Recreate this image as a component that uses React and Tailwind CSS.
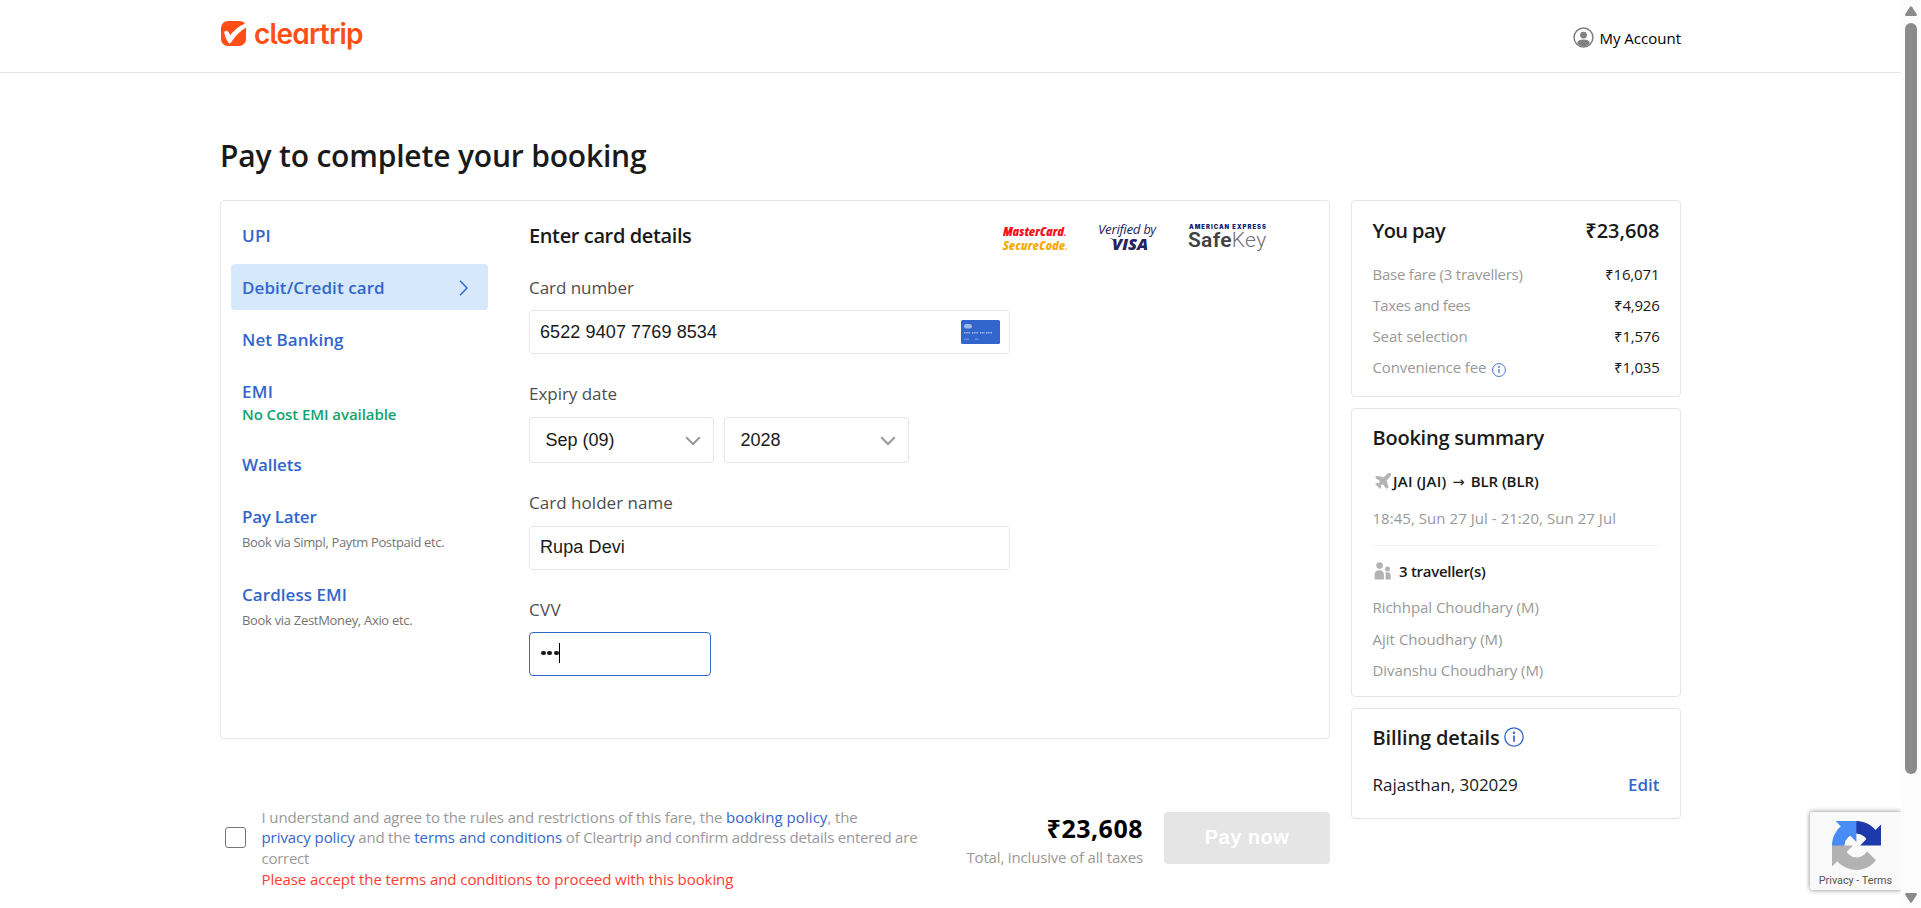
import React from "react";
import { Plane } from "lucide-react";

const fares = [
  ["Base fare (3 travellers)", "₹16,071", "tracking-[-0.015em]", "tracking-[-0.008em]"],
  ["Taxes and fees", "₹4,926", "tracking-[-0.028em]", "tracking-[-0.015em]"],
  ["Seat selection", "₹1,576", "tracking-[-0.007em]", "tracking-[-0.015em]"],
  ["Convenience fee", "₹1,035", "tracking-[-0.008em]", "tracking-[-0.015em]"],
];

function InfoIcon({ className }) {
  return (
    <svg viewBox="0 0 20 20" className={className} fill="none">
      <circle cx="10" cy="10" r="9.2" stroke="#3366cc" strokeWidth="1.3" />
      <circle cx="10" cy="5.7" r="1.25" fill="#3366cc" />
      <path d="M10 8.4v6.4" stroke="#3366cc" strokeWidth="1.7" />
    </svg>
  );
}

function BrandMark() {
  return (
    <svg viewBox="0 0 25 25" className="h-[25px] w-[25px]">
      <path
        d="M7 0h11.5c2.6 0 4.5 1 5.4 2.7C17.5 5 13 9.500 9.300 14.200 8.600 12.800 7.900 11.500 7.200 10.700 5.800 9 3 10 3.300 12c.5 3 2.300 7.300 4.200 9.700.8 1 1.900.9 2.600-.1C14 15.500 19 10.300 25 6.600V18a7 7 0 0 1-7 7H7a7 7 0 0 1-7-7V7a7 7 0 0 1 7-7z"
        fill="#ff4f17"
      />
    </svg>
  );
}

function Header() {
  return (
    <header className="h-[73px] border-b border-[#e6e6e6]">
      <div className="ml-[221px] flex h-full w-[1460px] items-start justify-between">
        <div className="flex items-start pt-[21px]">
          <BrandMark />
          <span className="-mt-px ml-[8px] font-[Inter,sans-serif] text-[28px] leading-[28px] font-semibold tracking-[-0.8px] text-[#ff4f17] [font-feature-settings:'cv11','cv05']">
            cleartrip
          </span>
        </div>
        <div className="flex items-center pt-[27px]">
          <svg viewBox="0 0 22 22" className="mr-[5px] mb-px h-[21px] w-[21px]" fill="none">
            <circle cx="11" cy="11" r="9.900" stroke="#808080" strokeWidth="1.600" />
            <circle cx="11" cy="8.500" r="3.600" fill="#808080" />
            <path d="M4.300 17.200c.6-3 3-4 6.700-4s6.100 1 6.700 4a9.200 9.200 0 0 1-13.400 0z" fill="#808080" />
          </svg>
          <span className="text-[15px] leading-[22px] text-black">My Account</span>
        </div>
      </div>
    </header>
  );
}

function Methods() {
  const title = "text-[17px] leading-5 font-semibold text-[#3366cc]";
  const sub = "text-[13px] leading-5 whitespace-nowrap text-[#757575]";
  return (
    <nav className="flex w-[257px] flex-col gap-1.5">
      <div className="flex h-[46px] items-center pt-[2px] pl-[11px]">
        <span className={title + " tracking-[0.015em]"}>UPI</span>
      </div>
      <div className="flex h-[46px] items-center justify-between rounded bg-[#d6e8fc] pr-[20px] pl-[11px]">
        <span className={title + " pt-[2px] tracking-[0.004em]"}>Debit/Credit card</span>
        <svg viewBox="0 0 9 16" className="mt-0.5 h-4 w-[9px]" fill="none" stroke="#3366cc" strokeWidth="1.500">
          <path d="M1 .7 8 8l-7 7.300" />
        </svg>
      </div>
      <div className="flex h-[46px] items-center pt-[2px] pl-[11px]">
        <span className={title + " tracking-[0.004em]"}>Net Banking</span>
      </div>
      <div className="h-[67px] pt-[14px] pl-[11px]">
        <div className={title + " tracking-[0.02em]"}>EMI</div>
        <div className="mt-[2px] text-[15px] leading-5 font-semibold tracking-[-0.005em] text-[#14a26f]">
          No Cost EMI available
        </div>
      </div>
      <div className="flex h-[46px] items-center pt-[2px] pl-[11px]">
        <span className={title + " tracking-[-0.005em]"}>Wallets</span>
      </div>
      <div className="h-[72px] pt-[14px] pl-[11px]">
        <div className={title + " tracking-[-0.015em]"}>Pay Later</div>
        <div className={sub + " mt-[5px] tracking-[-0.027em]"}>Book via Simpl, Paytm Postpaid etc.</div>
      </div>
      <div className="h-[72px] pt-[14px] pl-[11px]">
        <div className={title + " tracking-[0.003em]"}>Cardless EMI</div>
        <div className={sub + " mt-[5px] tracking-[-0.024em]"}>Book via ZestMoney, Axio etc.</div>
      </div>
    </nav>
  );
}

function SecurityLogos() {
  return (
    <div className="flex h-[30px] w-[265px] justify-between">
      <div className="w-[65px] pt-[4px] pl-px font-['Open_Sans',sans-serif] text-[13px] leading-[13px] font-extrabold whitespace-nowrap italic font-stretch-[75%]">
        <div className="tracking-[0.150px] text-[#f5101c]">
          MasterCard<span className="text-[8px]">.</span>
        </div>
        <div className="tracking-[0.400px] text-[#f7ab0a]">
          SecureCode<span className="text-[8px]">.</span>
        </div>
      </div>
      <div className="-mr-[1px] w-[60px] text-[#262262]">
        <div className="pt-[2px] text-[13.500px] leading-[13px] tracking-[-0.35px] whitespace-nowrap italic">
          Verified <span className="text-[12.500px]">by</span>
        </div>
        <div className="flex pt-px pl-[11px]">
          <svg viewBox="0 0 6 5" className="mt-[1px] -mr-[3px] h-[5px] w-[6px]">
            <path d="M0 .2C3 0 5 .5 6 4.500 4.800 2 3 .8 0 .2z" fill="#262262" />
          </svg>
          <span className="text-[16.500px] leading-[14px] font-extrabold italic">VISA</span>
        </div>
      </div>
      <div className="w-[79px] whitespace-nowrap">
        <div className="pt-[3px] pl-[1px] font-[Inter,sans-serif] text-[5.900px] leading-[6px] font-black tracking-[1.020px] text-[#0e2074]">
          AMERICAN EXPRESS
        </div>
        <div className="font-[Roboto,sans-serif] text-[21px] leading-[21px] tracking-[0.300px]">
          <span className="font-semibold text-[#414244]">Safe</span>
          <span className="font-light text-[#6f7072]">Key</span>
        </div>
      </div>
    </div>
  );
}

function CardGlyph() {
  return (
    <svg viewBox="0 0 39 24" className="h-6 w-[39px]">
      <rect width="39" height="24" rx="1.500" fill="#3366cc" />
      <rect x="3" y="4" width="8" height="4.500" rx="2.200" fill="#9fb8e8" />
      <path d="M3 12.700h6M11 12.700h6M19 12.700h5M25 12.700h6" stroke="#a9bfeb" strokeWidth="1.500" strokeDasharray="1.100 .6" />
      <path d="M3 19.200h5M14 19.200h3.500" stroke="#7f9fde" strokeWidth="1" />
    </svg>
  );
}

function Select({ value }) {
  return (
    <div className="flex h-[46px] w-[185px] items-center justify-between rounded border border-[#e6e6e6] pr-[12px] pl-[15.500px] font-['Liberation_Sans',Arial,sans-serif] text-[18px] leading-5 text-[#1a1a1a]">
      {value}
      <svg viewBox="0 0 16 10" className="mt-[2px] h-[10px] w-4" fill="none" stroke="#999999" strokeWidth="2">
        <path d="M1.200 1.300 8 8l6.800-6.700" />
      </svg>
    </div>
  );
}

function CardForm() {
  const label = "text-[17px] leading-5 text-[#4d4d4d]";
  const input =
    "flex h-11 items-center rounded border pl-[10px] font-['Liberation_Sans',Arial,sans-serif] text-[18px] leading-5 text-[#1a1a1a]";
  return (
    <section className="ml-[41px] w-[760px]">
      <div className="flex h-[30px] items-start justify-between pr-[22px]">
        <h2 className="pt-px text-[20px] leading-7 font-semibold tracking-[-0.019em] text-[#1a1a1a]">Enter card details</h2>
        <SecurityLogos />
      </div>
      <div className="mt-[27px]">
        <div className={label + " tracking-[-0.003em]"}>Card number</div>
        <div className={input + " mt-[12px] w-[481px] justify-between border-[#e6e6e6] pr-[9px] tracking-[0.1px]"}>
          6522 9407 7769 8534
          <CardGlyph />
        </div>
      </div>
      <div className="mt-[30px]">
        <div className={label + " tracking-[-0.002em]"}>Expiry date</div>
        <div className="mt-[13px] flex gap-[10px]">
          <Select value="Sep (09)" />
          <Select value="2028" />
        </div>
      </div>
      <div className="mt-[30px]">
        <div className={label + " tracking-[0.002em]"}>Card holder name</div>
        <div className={input + " mt-[13px] w-[481px] border-[#e6e6e6] pb-[3px] tracking-[0.1px]"}>Rupa Devi</div>
      </div>
      <div className="mt-[30px]">
        <div className={label + " tracking-[0.02em]"}>CVV</div>
        <div className={input + " mt-3 w-[182px] border-[#3366cc]"}>
          <span className="mt-[-2px] flex items-center gap-[1.900px] pl-[1px]">
            <i className="h-[4.600px] w-[4.600px] rounded-full bg-[#1a1a1a]" />
            <i className="h-[4.600px] w-[4.600px] rounded-full bg-[#1a1a1a]" />
            <i className="h-[4.600px] w-[4.600px] rounded-full bg-[#1a1a1a]" />
          </span>
          <span className="mt-[-3px] h-5 w-px bg-black" />
        </div>
      </div>
    </section>
  );
}

function Agreement() {
  return (
    <div className="mt-[68px] flex items-start">
      <div className="mt-5 ml-[5px] h-[21px] w-[21px] shrink-0 rounded-[3px] border border-[#767676] bg-white" />
      <div className="ml-[15.500px] w-[679.500px] text-[15px] leading-[21px] whitespace-nowrap text-[#999999]">
        <div className="leading-5 tracking-[-0.009em]">
          I understand and agree to the rules and restrictions of this fare, the{" "}
          <a className="tracking-[0.004em] text-[#3366cc]">booking policy</a>, the
        </div>
        <div className="tracking-[-0.014em]">
          <a className="tracking-[-0.004em] text-[#3366cc]">privacy policy</a> and the{" "}
          <a className="tracking-[-0.001em] text-[#3366cc]">terms and conditions</a> of Cleartrip and confirm address
          details entered are
        </div>
        <div className="tracking-[-0.018em]">correct</div>
        <div className="tracking-[-0.005em] text-[#ff3b30]">
          Please accept the terms and conditions to proceed with this booking
        </div>
      </div>
      <div className="flex-1 pt-[6px] text-right whitespace-nowrap">
        <div className="text-[25px] leading-[30px] font-bold tracking-[0.02em] text-black">₹23,608</div>
        <div className="mt-[4px] text-[15px] leading-5 tracking-[-0.011em] text-[#999999]">Total, inclusive of all taxes</div>
      </div>
      <button className="mt-[5px] ml-[21px] h-[52px] w-[166px] rounded bg-[#e5e5e5] pb-[2px] font-['Liberation_Sans',Arial,sans-serif] text-[20px] font-bold tracking-[0.5px] text-white">
        Pay now
      </button>
    </div>
  );
}

function Sidebar() {
  const card = "rounded border border-[#e6e6e6] pl-[20.500px] pr-[20.500px]";
  const head = "text-[20px] leading-7 font-semibold text-[#1a1a1a]";
  const grey = "text-[15px] leading-5 whitespace-nowrap text-[#999999]";
  return (
    <aside className="flex w-[330px] flex-col gap-[11px]">
      <div className={card + " h-[197px] pt-[16px]"}>
        <div className={head + " flex justify-between"}>
          <span className="tracking-[-0.030em]">You pay</span>
          <span className="tracking-[0.002em]">₹23,608</span>
        </div>
        <div className="mt-[19px] flex flex-col gap-[11px]">
          {fares.map(([name, amount, nameTrack, amountTrack]) => (
            <div key={name} className="flex h-5 items-center justify-between text-[15px] leading-5">
              <span className={"flex items-center text-[#999999] " + nameTrack}>
                {name}
                {name === "Convenience fee" && <InfoIcon className="mt-[5px] ml-[5.500px] h-[14px] w-[14px]" />}
              </span>
              <span className={"text-[#1a1a1a] " + amountTrack}>{amount}</span>
            </div>
          ))}
        </div>
      </div>
      <div className={card + " h-[289px] pt-[15px]"}>
        <div className={head + " tracking-[-0.012em]"}>Booking summary</div>
        <div className="mt-[19px] flex h-5 items-center text-[15px] font-semibold whitespace-nowrap text-[#1a1a1a]">
          <Plane className="h-5 w-5" fill="#b3b3b3" stroke="#b3b3b3" strokeWidth={1} />
          <span className="ml-[0.500px] tracking-[0.016em]">JAI (JAI)</span>
          <span className="mx-[6px] pt-[4px] font-['DejaVu_Sans'] text-[14.500px] font-normal">→</span>
          <span className="tracking-[-0.005em]">BLR (BLR)</span>
        </div>
        <div className={grey + " mt-[17px] tracking-[0.003em]"}>18:45, Sun 27 Jul - 21:20, Sun 27 Jul</div>
        <div className="mt-[17px] mr-px border-t border-[#f2f2f2]" />
        <div className="mt-[15px] flex h-5 items-center text-[15px] font-semibold text-[#1a1a1a]">
          <svg viewBox="0 0 17 18" className="ml-[1.500px] h-[18px] w-[17px]" fill="#b3b3b3">
            <circle cx="5.600" cy="3.600" r="3.300" />
            <path d="M.6 17.500v-4.800C.6 10 2.200 8.200 5.200 8.200s4.700 1.800 4.700 4.500v4.800z" />
            <circle cx="13.500" cy="7" r="2.500" />
            <path d="M11.600 17.500v-4.800c0-.9-.1-1.500-.4-2 .6-.4 1.300-.5 2-.5 2.100 0 3.500 1.200 3.500 3.300v4z" />
          </svg>
          <span className="ml-[8px] tracking-[-0.019em]">3 traveller(s)</span>
        </div>
        <div className={grey + " mt-4 tracking-[-0.003em]"}>Richhpal Choudhary (M)</div>
        <div className={grey + " mt-3 tracking-[0.001em]"}>Ajit Choudhary (M)</div>
        <div className={grey + " mt-[11px] tracking-[-0.006em]"}>Divanshu Choudhary (M)</div>
      </div>
      <div className={card + " h-[111px] pt-[15px]"}>
        <div className={head + " flex items-center"}>
          <span className="tracking-[-0.006em]">Billing details</span>
          <InfoIcon className="mb-[2px] ml-[4px] h-5 w-5" />
        </div>
        <div className="mt-[23px] flex justify-between text-[17px] leading-5">
          <span className="text-[#1a1a1a]">Rajasthan, 302029</span>
          <a className="font-semibold text-[#3366cc]">Edit</a>
        </div>
      </div>
    </aside>
  );
}

function Captcha() {
  return (
    <div className="absolute right-0 bottom-[18px] flex h-[78px] w-[91px] flex-col items-center rounded-l-[2px] bg-[#f9f9f9] pt-[9px] shadow-[0_0_5px_#808080] [clip-path:inset(-8px_0_-8px_-8px)]">
      <svg viewBox="0 0 64 64" className="ml-px h-[49px] w-[49px]">
        <path
          d="M64 31.955l-.033-1.370V4.687l-7.160 7.160C50.948 4.674 42.033.093 32.050.093c-10.400 0-19.622 4.960-25.458 12.640l11.736 11.860a15.550 15.550 0 0 1 4.754-5.334c2.050-1.600 4.952-2.906 8.968-2.906.485 0 .86.057 1.135.163 4.976.393 9.288 3.140 11.828 7.124l-8.307 8.307L64 31.953"
          fill="#1c3aa9"
        />
        <path
          d="M31.862.094l-1.370.033H4.594l7.160 7.160C4.580 13.147 0 22.060 0 32.046c0 10.400 4.960 19.622 12.640 25.458L24.500 45.768a15.550 15.550 0 0 1-5.334-4.754c-1.600-2.050-2.906-4.952-2.906-8.968 0-.485.057-.86.163-1.135.393-4.976 3.140-9.288 7.124-11.828l8.307 8.307L31.860.095"
          fill="#4a8cf5"
        />
        <path
          d="M.001 32.045l.033 1.370v25.898l7.160-7.160c5.860 7.173 14.774 11.754 24.760 11.754 10.400 0 19.622-4.960 25.458-12.640l-11.736-11.860a15.550 15.550 0 0 1-4.754 5.334c-2.050 1.600-4.952 2.906-8.968 2.906-.485 0-.86-.057-1.135-.163-4.976-.393-9.288-3.140-11.828-7.124l8.307-8.307c-10.522.04-22.400.066-27.295-.005"
          fill="#b2b2b2"
        />
      </svg>
      <div className="mt-[3px] font-[Roboto,sans-serif] text-[10.800px] leading-4 whitespace-nowrap text-[#555555]">
        Privacy - Terms
      </div>
    </div>
  );
}

function Scrollbar() {
  return (
    <div className="flex w-5 shrink-0 flex-col items-center bg-[#fcfcfc] py-[5px]">
      <svg viewBox="0 0 12 10" className="mt-px h-[10px] w-3" fill="#8b8b8b">
        <path d="M5 .8Q6-.4 7 .8l4.800 7.500q.4 1.500-1 1.700H1.200q-1.400-.2-1-1.700z" />
      </svg>
      <div className="mt-[7px] h-[751px] w-3 rounded-full bg-[#8b8b8b]" />
      <svg viewBox="0 0 12 10" className="mt-auto h-[10px] w-3" fill="#8b8b8b">
        <path d="M5 9.200q1 1.200 2 0l4.800-7.500q.4-1.500-1-1.700H1.200Q-.2.200.2 1.700z" />
      </svg>
    </div>
  );
}

export default function App() {
  return (
    <div className="flex h-[908px] w-[1921px] overflow-hidden bg-white font-['Open_Sans','Noto_Sans',sans-serif]">
      <div className="relative w-[1901px]">
        <Header />
        <main className="ml-[220px] w-[1461px] pt-[63px]">
          <h1 className="text-[30px] leading-10 font-semibold tracking-[-0.006em] text-[#1a1a1a]">
            Pay to complete your booking
          </h1>
          <div className="mt-6 flex justify-between">
            <div className="w-[1110px]">
              <div className="flex h-[539px] rounded border border-[#e6e6e6] pt-[11px] pl-[10px]">
                <Methods />
                <div className="pt-[9px]">
                  <CardForm />
                </div>
              </div>
              <Agreement />
            </div>
            <Sidebar />
          </div>
        </main>
        <Captcha />
      </div>
      <Scrollbar />
    </div>
  );
}
